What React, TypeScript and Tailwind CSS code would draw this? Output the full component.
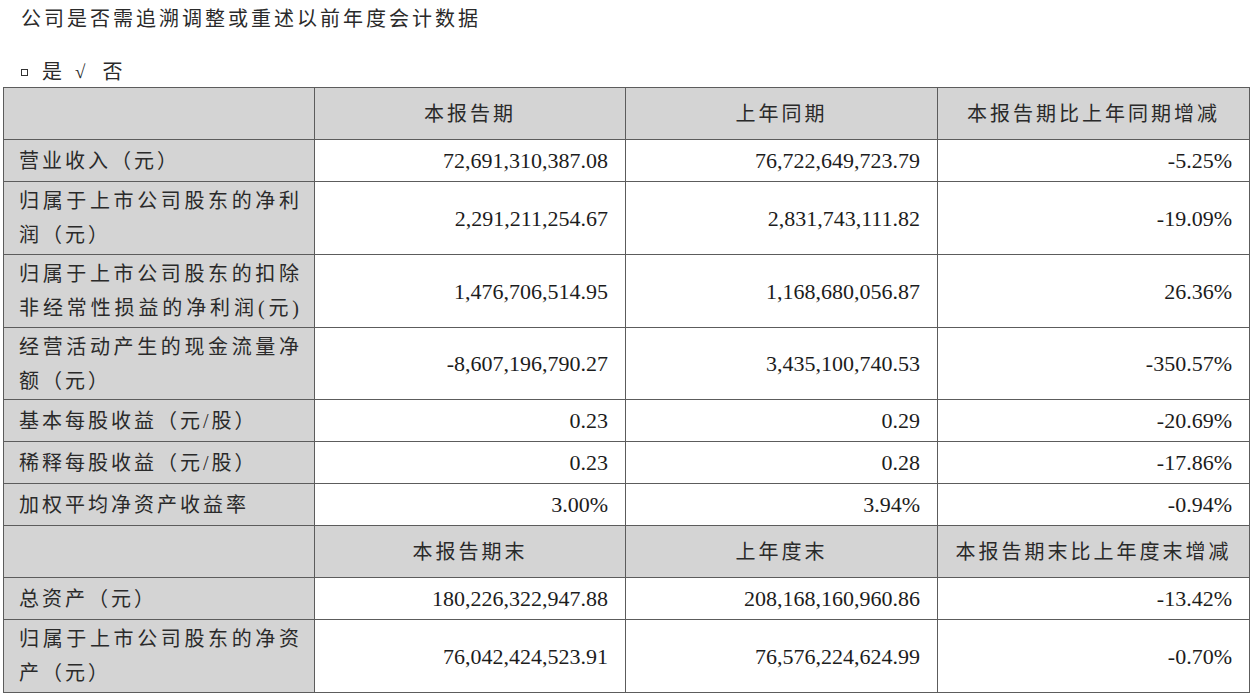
type Row =
  | { kind: "head"; cells: string[] }
  | { kind: "data"; label: string[]; justify?: boolean[]; values: string[]; h: number };

const rows: Row[] = [
  { kind: "head", cells: ["本报告期", "上年同期", "本报告期比上年同期增减"] },
  { kind: "data", label: ["营业收入（元）"], values: ["72,691,310,387.08", "76,722,649,723.79", "-5.25%"], h: 42 },
  {
    kind: "data",
    label: ["归属于上市公司股东的净利", "润（元）"],
    justify: [true, false],
    values: ["2,291,211,254.67", "2,831,743,111.82", "-19.09%"],
    h: 73,
  },
  {
    kind: "data",
    label: ["归属于上市公司股东的扣除", "非经常性损益的净利润(元)"],
    justify: [true, true],
    values: ["1,476,706,514.95", "1,168,680,056.87", "26.36%"],
    h: 73,
  },
  {
    kind: "data",
    label: ["经营活动产生的现金流量净", "额（元）"],
    justify: [true, false],
    values: ["-8,607,196,790.27", "3,435,100,740.53", "-350.57%"],
    h: 72,
  },
  { kind: "data", label: ["基本每股收益（元/股）"], values: ["0.23", "0.29", "-20.69%"], h: 42 },
  { kind: "data", label: ["稀释每股收益（元/股）"], values: ["0.23", "0.28", "-17.86%"], h: 42 },
  { kind: "data", label: ["加权平均净资产收益率"], values: ["3.00%", "3.94%", "-0.94%"], h: 42 },
  { kind: "head", cells: ["本报告期末", "上年度末", "本报告期末比上年度末增减"] },
  { kind: "data", label: ["总资产（元）"], values: ["180,226,322,947.88", "208,168,160,960.86", "-13.42%"], h: 42 },
  {
    kind: "data",
    label: ["归属于上市公司股东的净资", "产（元）"],
    justify: [true, false],
    values: ["76,042,424,523.91", "76,576,224,624.99", "-0.70%"],
    h: 73,
  },
];

const cell = "border border-[#5c5c5c] p-0";

export default function App() {
  return (
    <div className="min-h-[696px] w-[1252px] bg-white text-[#2a2a2a] font-['Liberation_Serif','Noto_Sans_CJK_SC',serif]">
      {/* question line */}
      <div className="pt-[5px] pl-[21px] text-[20px] leading-[28px] tracking-[3px]">
        公司是否需追溯调整或重述以前年度会计数据
      </div>
      <div className="mt-[25px] flex h-[28px] items-center pl-[21px] text-[20px] tracking-[3px]">
        <span className="mt-[1px] inline-block h-[7px] w-[7px] border border-[#333]" />
        <span className="ml-[14px]">是</span>
        <span className="ml-[10px] font-['Liberation_Serif'] text-[19px]">√</span>
        <span className="ml-[14px]">否</span>
      </div>

      <table className="mt-[1px] ml-[3px] w-[1246px] table-fixed border-collapse">
        <colgroup>
          <col className="w-[311px]" />
          <col className="w-[311px]" />
          <col className="w-[312px]" />
          <col className="w-[312px]" />
        </colgroup>
        <tbody>
          {rows.map((r, i) =>
            r.kind === "head" ? (
              <tr key={i} className="h-[52px] bg-[#d4d4d4]">
                <td className={cell} />
                {r.cells.map((c) => (
                  <td key={c} className={`${cell} text-center text-[20px] tracking-[3px]`}>
                    {c}
                  </td>
                ))}
              </tr>
            ) : (
              <tr key={i} style={{ height: r.h }}>
                <td className={`${cell} bg-[#d4d4d4] px-[15px] text-[20px] leading-[34px]`}>
                  {r.label.map((l, j) =>
                    r.justify?.[j] ? (
                      <div key={j} className="text-justify [text-align-last:justify]">
                        {l}
                      </div>
                    ) : (
                      <div key={j} className="tracking-[3px]">
                        {l}
                      </div>
                    )
                  )}
                </td>
                {r.values.map((v, j) => (
                  <td key={j} className={`${cell} pr-[17px] text-right text-[22px] text-[#1c1c1c]`}>
                    {v}
                  </td>
                ))}
              </tr>
            )
          )}
        </tbody>
      </table>
    </div>
  );
}
